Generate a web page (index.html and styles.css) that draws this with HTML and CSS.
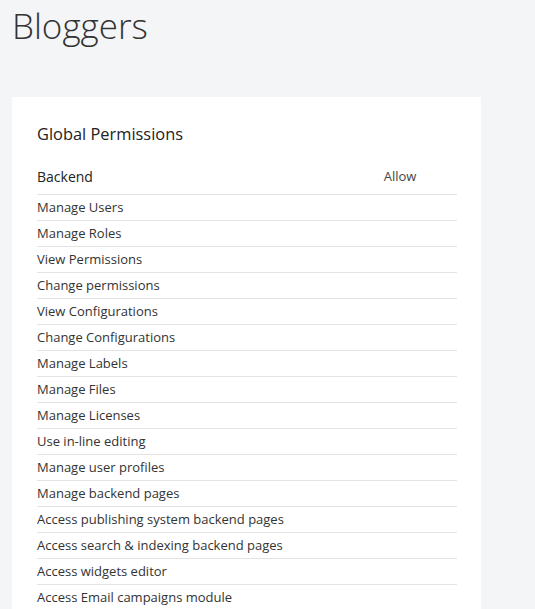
FILE: index.html
```html
<!DOCTYPE html>
<html>
<head>
<meta charset="utf-8">
<link rel="stylesheet" href="styles.css">
</head>
<body>
<h1 class="page-title">Bloggers</h1>
<section class="card">
  <h2 class="card-title">Global Permissions</h2>
  <div class="perm-table">
    <div class="perm-head">
      <span class="perm-group">Backend</span>
      <span class="perm-col">Allow</span>
    </div>
    <div class="perm-row">Manage Users</div>
    <div class="perm-row">Manage Roles</div>
    <div class="perm-row">View Permissions</div>
    <div class="perm-row">Change permissions</div>
    <div class="perm-row">View Configurations</div>
    <div class="perm-row">Change Configurations</div>
    <div class="perm-row">Manage Labels</div>
    <div class="perm-row">Manage Files</div>
    <div class="perm-row">Manage Licenses</div>
    <div class="perm-row">Use in-line editing</div>
    <div class="perm-row">Manage user profiles</div>
    <div class="perm-row">Manage backend pages</div>
    <div class="perm-row">Access publishing system backend pages</div>
    <div class="perm-row">Access search &amp; indexing backend pages</div>
    <div class="perm-row">Access widgets editor</div>
    <div class="perm-row">Access Email campaigns module</div>
  </div>
</section>
</body>
</html>
```
FILE: styles.css
```css
html, body {
  margin: 0;
  padding: 0;
}
body {
  background: #f4f5f7;
  font-family: "Open Sans", "Noto Sans", sans-serif;
  color: #333;
  overflow: hidden;
}
.page-title {
  margin: 6px 0 0 12px;
  font-size: 35px;
  line-height: 40px;
  font-weight: 300;
  color: #333;
}
.card {
  margin: 51px 0 0 12px;
  width: 420px;
  background: #fff;
  padding: 26px 24px 0 25px;
}
.card-title {
  margin: 0;
  font-size: 16.4px;
  line-height: 22px;
  font-weight: 400;
  color: #222;
}
.perm-table {
  margin-top: 21px;
}
.perm-head {
  display: flex;
  align-items: center;
  height: 20px;
  padding-bottom: 8px;
  border-bottom: 1px solid #e3e3e3;
}
.perm-group {
  flex: 1;
  font-size: 14px;
  font-weight: 500;
  color: #222;
}
.perm-col {
  width: 114px;
  text-align: center;
  font-size: 13px;
  color: #444;
}
.perm-row {
  height: 25px;
  line-height: 25px;
  font-size: 13px;
  border-bottom: 1px solid #e3e3e3;
  color: #333;
}
```
